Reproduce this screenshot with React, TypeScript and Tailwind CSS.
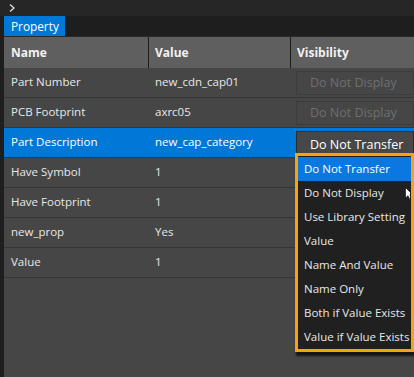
import React from "react";

const rows: { name: string; value: string; vis?: "disabled" | "select" }[] = [
  { name: "Part Number", value: "new_cdn_cap01", vis: "disabled" },
  { name: "PCB Footprint", value: "axrc05", vis: "disabled" },
  { name: "Part Description", value: "new_cap_category", vis: "select" },
  { name: "Have Symbol", value: "1" },
  { name: "Have Footprint", value: "1" },
  { name: "new_prop", value: "Yes" },
  { name: "Value", value: "1" },
];

const options = [
  "Do Not Transfer",
  "Do Not Display",
  "Use Library Setting",
  "Value",
  "Name And Value",
  "Name Only",
  "Both if Value Exists",
  "Value if Value Exists",
];

export default function App() {
  return (
    <div
      className="relative w-[414px] h-[377px] overflow-hidden bg-[#1e1e1e] text-[11.5px] text-[#e8e8e8]"
      style={{ fontFamily: '"Open Sans", "Noto Sans", sans-serif' }}
    >
      <div className="h-[16px] bg-[#262626] flex items-center pl-[8px]">
        <svg width="8" height="10" viewBox="0 0 8 10">
          <path d="M2 1.5 L6 5 L2 8.5" stroke="#e0e0e0" strokeWidth="1.3" fill="none" />
        </svg>
      </div>
      <div className="h-[20px] flex bg-[#1e1e1e] pl-[4px]">
        <div className="w-[61px] bg-[#0078d7] text-white text-[11.8px] leading-[20px] pl-[7px]">Property</div>
      </div>
      <div className="flex h-[341px]">
        <div className="w-[4px] bg-[#1e1e1e]" />
        <div className="flex-1 bg-[#464646] flex flex-col">
          <div className="h-[32px] grid grid-cols-[145px_142px_1fr] bg-[#5f5f5f] border-t border-[#2a2a2a] font-bold text-[12px] text-[#f2f2f2]">
            <div className="flex items-center pl-[7px] border-r border-[#1c1c1c]">Name</div>
            <div className="flex items-center pl-[6px] border-r border-[#1c1c1c]">Value</div>
            <div className="flex items-center pl-[6px]">Visibility</div>
          </div>
          {rows.map((r) => (
            <div
              key={r.name}
              className={`h-[30px] grid grid-cols-[145px_142px_1fr] border-b border-[#353535] ${
                r.vis === "select" ? "bg-[#0078d7] text-white" : ""
              }`}
            >
              <div className="flex items-center pl-[7px] pb-[2px] whitespace-nowrap">{r.name}</div>
              <div className="flex items-center pl-[6px] pb-[2px] whitespace-nowrap">{r.value}</div>
              <div className="pl-[5px] pt-[3px]">
                {r.vis === "disabled" && (
                  <div className="h-[24px] border border-[#3c3c3c] bg-[#464646] text-[#6f6f6f] text-[12.5px] leading-[22px] pl-[13px] whitespace-nowrap">
                    Do Not Display
                  </div>
                )}
                {r.vis === "select" && (
                  <div className="h-[27px] border border-[#2e2e2e] bg-[#474747] text-white text-[12.5px] leading-[25px] pl-[13px] whitespace-nowrap">
                    Do Not Transfer
                  </div>
                )}
              </div>
            </div>
          ))}
        </div>
      </div>

      <div className="absolute left-[295px] top-[153px] w-[119px] border-[3px] border-[#f5a50a] bg-[#202020] pt-[1px] shadow-[1px_4px_2px_rgba(0,0,0,0.7)]">
        {options.map((o, i) => (
          <div
            key={o}
            className={`h-[24px] leading-[24px] pl-[6px] whitespace-nowrap ${
              i === 0 ? "bg-[#0a78e0] text-white" : "text-[#e8e8e8]"
            }`}
          >
            {o}
          </div>
        ))}
      </div>
      <div className="absolute left-[405px] top-[187px] w-[5px] h-[14px] overflow-hidden">
        <svg width="11" height="14" viewBox="0 0 11 14">
          <path d="M0.5 0.5 L0.5 11 L3 8.8 L5 13 L6.8 12.2 L4.9 8.2 L8.2 8.2 Z" fill="#ffffff" stroke="#000" strokeWidth="0.6" />
        </svg>
      </div>
    </div>
  );
}
